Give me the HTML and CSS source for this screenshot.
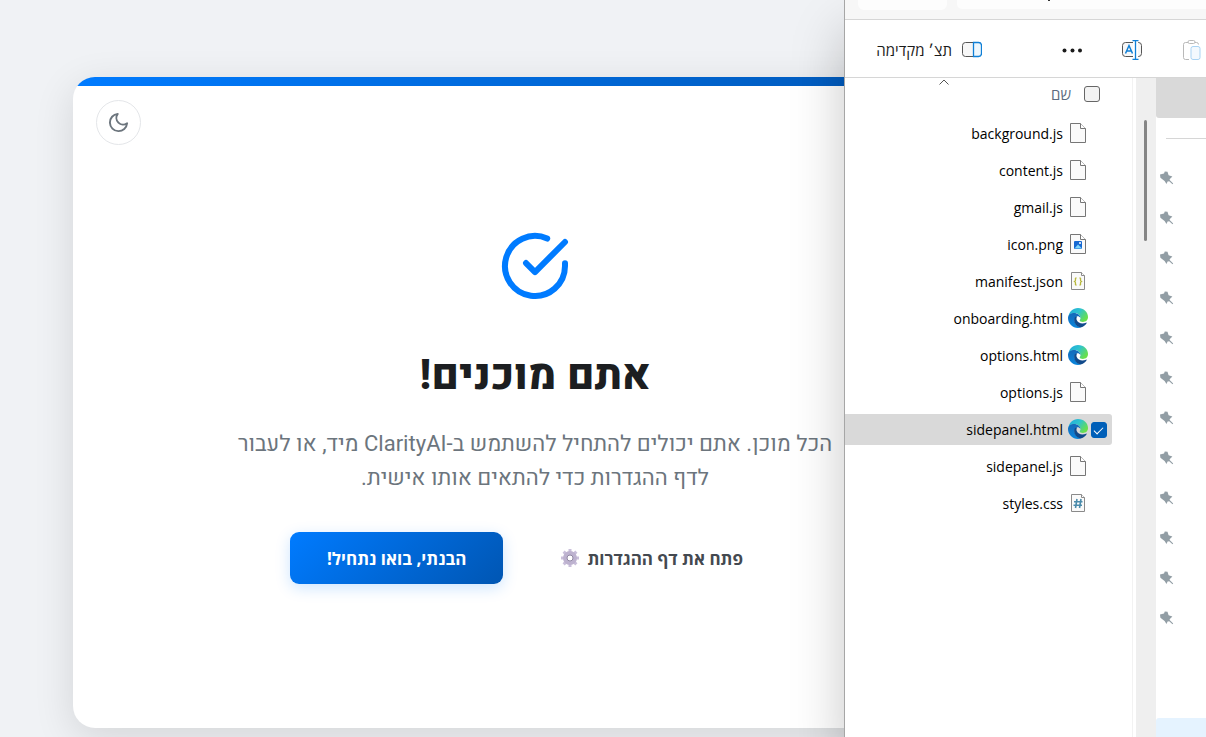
FILE: index.html
```
<!DOCTYPE html>
<html lang="he" dir="rtl">

<head>
    <meta charset="UTF-8">
    <meta name="viewport" content="width=device-width, initial-scale=1.0">
    <title>ClarityAI</title>
    <link rel="stylesheet" href="styles.css">
</head>

<body>
    <svg width="0" height="0" class="symbols" aria-hidden="true">
        <defs>
            <linearGradient id="edge-top" x1="0" y1="0" x2="1" y2="0.6">
                <stop offset="0" stop-color="#1fa8dc" />
                <stop offset="0.5" stop-color="#2fc3cf" />
                <stop offset="1" stop-color="#6ae04a" />
            </linearGradient>
            <linearGradient id="edge-side" x1="0" y1="0" x2="0" y2="1">
                <stop offset="0" stop-color="#1569b8" />
                <stop offset="1" stop-color="#0a86dc" />
            </linearGradient>
        </defs>
        <symbol id="doc" viewBox="0 0 20 20">
            <path d="M2.5 .5h10l5 5v14h-15z" fill="#fafafa" stroke="#767676" />
            <path d="M12.5 .5v5h5" fill="#fff" stroke="#767676" />
        </symbol>
        <symbol id="doc-small" viewBox="0 0 20 20">
            <path d="M3.5 1.5h10l3 3v14h-13z" fill="#fafafa" stroke="#8a8a8a" />
            <path d="M13.5 1.5v3h3" fill="#fff" stroke="#8a8a8a" />
        </symbol>
        <symbol id="edge" viewBox="0 0 20 20">
            <path d="M0.4 9C1 3.700 5 0 10 0c5.800 0 10 4.300 10 9 0 3.200-2.300 4.900-5 4.900-2.200 0-3.300-.8-3.300-1.500 0-.6.8-.9.8-2.400C12.500 7 9.500 5 6.300 5 3.500 5 1.300 6.700.4 9z" fill="url(#edge-top)" />
            <path d="M0 10C0 6.800 2.900 4.900 6.100 4.900c3.400 0 6.400 2.100 6.400 5.100-1-1.600-2.200-2-3.300-1.800C7.500 8.600 6.600 10 6.600 12c0 3.700 2.700 6.500 6.400 7.500-.9.300-1.900.5-3 .5C4.500 20 0 15.500 0 10z" fill="url(#edge-side)" />
            <path d="M6.200 11c-.3 4 2.300 7.600 6.200 8.600 2.600-.4 4.900-2.200 6.200-4.400.3-.5-.1-.8-.6-.5-3.600 1.700-8 .7-9.300-2.700-.5-1.400-.1-2.900.6-3.700-1.700.2-3 1.200-3.100 2.700z" fill="#114a8b" />
        </symbol>
        <symbol id="pin" viewBox="0 0 14 14">
            <path d="M0 3.500 4 2.500 4.800 .6 7.500 .8 8.600 4.300 12.400 5.400 9.600 8.300 9.900 9.200 13.200 12.500 12.500 13.300 9.200 10.300 7.600 10.500 6.500 13 4.600 10 .4 6.800z" fill="#929ea5" />
        </symbol>
    </svg>

    <main class="page">
        <section class="card">
            <button class="theme-toggle" type="button" aria-label="מצב כהה">
                <svg width="23" height="23" viewBox="0 0 24 24" fill="none" stroke="currentColor" stroke-width="2" stroke-linecap="round" stroke-linejoin="round">
                    <path d="M21 12.790A9 9 0 1 1 11.210 3 7 7 0 0 0 21 12.790z" />
                </svg>
            </button>
            <svg class="card-icon" width="72" height="72" viewBox="0 0 24 24" fill="none" stroke="currentColor" stroke-width="2" stroke-linecap="round" stroke-linejoin="round">
                <path d="M22 11.080V12a10 10 0 1 1-5.930-9.140" />
                <path d="M22 4 12 14.010l-3-3" />
            </svg>
            <h1>אתם מוכנים!</h1>
            <p>הכל מוכן. אתם יכולים להתחיל להשתמש ב-ClarityAI מיד, או לעבור לדף ההגדרות כדי להתאים אותו אישית.</p>
            <div class="actions">
                <button class="btn btn-secondary" type="button">
                    פתח את דף ההגדרות
                    <svg width="20" height="20" viewBox="0 0 20 20">
                        <g stroke="#c9bfda" stroke-width="3">
                            <path d="M10 1v18M1 10h18M3.600 3.600l12.800 12.800M16.400 3.600 3.600 16.400" />
                        </g>
                        <circle cx="10" cy="10" r="5" fill="#e9e5f0" stroke="#bdb2cf" stroke-width="4" />
                        <circle cx="10" cy="10" r="3" fill="#fff" stroke="#9188a3" />
                    </svg>
                </button>
                <button class="btn btn-primary" type="button">הבנתי, בואו נתחיל!</button>
            </div>
        </section>
    </main>

    <aside class="explorer">
        <div class="address-bar">
            <div class="address"><span class="address-tail"></span></div>
            <div class="search"></div>
        </div>

        <div class="toolbar">
            <button class="tool" type="button" aria-label="הדבק" disabled>
                <svg width="20" height="20" viewBox="0 0 20 20" fill="none">
                    <path d="M6 2.500H3.500a2 2 0 0 0-2 2v13a2 2 0 0 0 2 2H7M13 2.500h1.500a2 2 0 0 1 2 2" stroke="#b9b9b9" />
                    <rect x="6" y=".5" width="7" height="3" rx="1.500" stroke="#b9b9b9" />
                    <rect x="9" y="6.500" width="9" height="13" rx="2" fill="#f3f9fe" stroke="#a9d3f3" />
                </svg>
            </button>
            <button class="tool" type="button" aria-label="שנה שם">
                <svg width="20" height="20" viewBox="0 0 20 20" fill="none">
                    <path d="M11 2.500H3.500a3 3 0 0 0-3 3v8a3 3 0 0 0 3 3H11M16 2.500h.5a3 3 0 0 1 3 3v8a3 3 0 0 1-3 3H16" fill="#f7f7f7" stroke="#555" />
                    <path d="M3.500 13.500 7 5.500l3.500 8M4.800 11h4.400" stroke="#0f7fd6" stroke-width="1.500" />
                    <path d="M13.500.5v19M10.500.5h6M10.500 19.500h6" stroke="#0f7fd6" stroke-width="1.300" />
                </svg>
            </button>
            <button class="tool" type="button" aria-label="עוד">
                <svg width="20" height="20" viewBox="0 0 20 20" fill="#1b1b1b">
                    <circle cx="2.500" cy="10.500" r="2" />
                    <circle cx="10.500" cy="10.500" r="2" />
                    <circle cx="18" cy="10.500" r="2" />
                </svg>
            </button>
            <button class="tool tool-preview" type="button">
                <svg width="20" height="20" viewBox="0 0 20 20">
                    <path d="M11.500 2.500h-8a3 3 0 0 0-3 3v8a3 3 0 0 0 3 3h8" fill="#f7f7f7" stroke="#555" />
                    <path d="M11.500 2.500h5a3 3 0 0 1 3 3v8a3 3 0 0 1-3 3h-5z" fill="#eef7fd" stroke="#0f7fd6" stroke-width="1.300" />
                </svg>
                תצ׳ מקדימה
            </button>
        </div>

        <div class="panes">
            <nav class="nav-pane">
                <div class="nav-head"></div>
                <hr>
                <ul class="pins">
                    <li><svg width="14" height="14"><use href="#pin" /></svg></li>
                    <li><svg width="14" height="14"><use href="#pin" /></svg></li>
                    <li><svg width="14" height="14"><use href="#pin" /></svg></li>
                    <li><svg width="14" height="14"><use href="#pin" /></svg></li>
                    <li><svg width="14" height="14"><use href="#pin" /></svg></li>
                    <li><svg width="14" height="14"><use href="#pin" /></svg></li>
                    <li><svg width="14" height="14"><use href="#pin" /></svg></li>
                    <li><svg width="14" height="14"><use href="#pin" /></svg></li>
                    <li><svg width="14" height="14"><use href="#pin" /></svg></li>
                    <li><svg width="14" height="14"><use href="#pin" /></svg></li>
                    <li><svg width="14" height="14"><use href="#pin" /></svg></li>
                    <li><svg width="14" height="14"><use href="#pin" /></svg></li>
                </ul>
                <div class="nav-current"></div>
            </nav>
            <div class="scrollbar">
                <div class="thumb"></div>
            </div>
            <div class="files">
                <div class="files-head">
                    <svg class="sort" width="10" height="6" viewBox="0 0 10 6" fill="none" stroke="#555">
                        <path d="M.5 5.500 5 1l4.500 4.500" />
                    </svg>
                    <input class="check" type="checkbox" id="all">
                    <label for="all">שם</label>
                </div>
                <ul class="file-list">
                    <li class="file">
                        <input class="check" type="checkbox" id="f1">
                        <svg width="20" height="20"><use href="#doc" /></svg>
                        <label for="f1">background.js</label>
                    </li>
                    <li class="file">
                        <input class="check" type="checkbox" id="f2">
                        <svg width="20" height="20"><use href="#doc" /></svg>
                        <label for="f2">content.js</label>
                    </li>
                    <li class="file">
                        <input class="check" type="checkbox" id="f3">
                        <svg width="20" height="20"><use href="#doc" /></svg>
                        <label for="f3">gmail.js</label>
                    </li>
                    <li class="file">
                        <input class="check" type="checkbox" id="f4">
                        <svg width="20" height="20">
                            <use href="#doc" />
                            <rect x="6" y="7" width="8" height="8" rx="1" fill="#1769d2" />
                            <path d="m6.500 14.500 3.500-4 4 4z" fill="#7fd6fb" />
                            <circle cx="12" cy="9" r="1" fill="#fff" />
                        </svg>
                        <label for="f4">icon.png</label>
                    </li>
                    <li class="file">
                        <input class="check" type="checkbox" id="f5">
                        <svg width="20" height="20" fill="none">
                            <use href="#doc-small" />
                            <path d="M8.500 7C7 7 7.500 8 7.500 9s-.3 1-1 1.500c.7.500 1 .5 1 1.500s-.5 2 1 2M11.500 7c1.500 0 1 1 1 2s.3 1 1 1.500c-.7.500-1 .5-1 1.500s.5 2-1 2" stroke="#b7b73b" stroke-width="1.300" />
                        </svg>
                        <label for="f5">manifest.json</label>
                    </li>
                    <li class="file">
                        <input class="check" type="checkbox" id="f6">
                        <svg width="20" height="20"><use href="#edge" /></svg>
                        <label for="f6">onboarding.html</label>
                    </li>
                    <li class="file">
                        <input class="check" type="checkbox" id="f7">
                        <svg width="20" height="20"><use href="#edge" /></svg>
                        <label for="f7">options.html</label>
                    </li>
                    <li class="file">
                        <input class="check" type="checkbox" id="f8">
                        <svg width="20" height="20"><use href="#doc" /></svg>
                        <label for="f8">options.js</label>
                    </li>
                    <li class="file selected">
                        <input class="check" type="checkbox" id="f9" checked>
                        <svg width="20" height="20"><use href="#edge" /></svg>
                        <label for="f9">sidepanel.html</label>
                    </li>
                    <li class="file">
                        <input class="check" type="checkbox" id="f10">
                        <svg width="20" height="20"><use href="#doc" /></svg>
                        <label for="f10">sidepanel.js</label>
                    </li>
                    <li class="file">
                        <input class="check" type="checkbox" id="f11">
                        <svg width="20" height="20" fill="none">
                            <use href="#doc-small" />
                            <path d="M9 6 7.500 15M13 6l-1.500 9M6 8.700h8.500M5.500 12.300H14" stroke="#4b8bab" stroke-width="1.600" />
                        </svg>
                        <label for="f11">styles.css</label>
                    </li>
                </ul>
            </div>
        </div>
    </aside>
</body>

</html>
```
FILE: styles.css
```
* {
    box-sizing: border-box;
}

body {
    margin: 0;
    min-height: 100vh;
    background-color: #f0f2f5;
    font-family: Heebo, Roboto, "Open Sans", sans-serif;
    overflow: hidden;
}

button {
    border: none;
    background: none;
    padding: 0;
    font-family: "Open Sans", sans-serif;
}

ul {
    list-style: none;
    margin: 0;
    padding: 0;
}

.symbols {
    position: absolute;
}

/* onboarding page, runs on behind the file window */
.page {
    margin-right: 136px;
    padding: 77px 73px 0;
}

.card {
    position: relative;
    display: flex;
    flex-direction: column;
    align-items: center;
    padding: 153px 48px 144px;
    border-radius: 22px;
    background: linear-gradient(90deg, #007bff, #0056b3) top / 100% 9px no-repeat #fff;
    box-shadow: 0 10px 40px rgba(0, 0, 0, 0.12);
    text-align: center;
}

.theme-toggle {
    position: absolute;
    top: 23px;
    left: 23px;
    display: flex;
    align-items: center;
    justify-content: center;
    width: 45px;
    height: 45px;
    border: 1px solid #e4e6e9;
    border-radius: 50%;
    color: #6c757d;
}

.card-icon {
    color: #007bff;
}

h1 {
    margin: 48px 0 24px;
    font-size: 42px;
    line-height: 53px;
    font-weight: 800;
    color: #1c1e21;
}

.card p {
    max-width: 610px;
    margin: 0 0 37px;
    font-size: 22px;
    line-height: 34px;
    color: #6c757d;
}

.actions {
    display: flex;
    gap: 20px;
}

.btn {
    display: flex;
    align-items: center;
    gap: 7px;
    height: 52px;
    padding: 0 37px;
    border-radius: 9px;
    font-size: 17px;
    font-weight: 700;
}

.btn-primary {
    color: #fff;
    background: linear-gradient(135deg, #007bff, #0056b3);
    box-shadow: 0 4px 15px rgba(0, 123, 255, 0.2);
}

.btn-secondary {
    color: #444950;
}

/* file window */
.explorer {
    position: absolute;
    top: 0;
    right: 0;
    display: flex;
    flex-direction: column;
    width: 362px;
    height: 100vh;
    border-left: 1px solid #a6a6a6;
    background-color: #fff;
    box-shadow: 0 30px 50px rgba(0, 0, 0, 0.22);
    font-family: "Open Sans", sans-serif;
}

.address-bar {
    display: flex;
    align-items: flex-start;
    gap: 10px;
    height: 20px;
    padding-left: 13px;
    border-bottom: 1px solid #d6d6d6;
    background-color: #f7f7f7;
}

.address {
    flex: 1;
    height: 9px;
    padding-right: 156px;
    border-radius: 0 0 0 5px;
    background-color: #fdfdfd;
}

.address-tail {
    display: block;
    width: 2px;
    height: 1px;
    background-color: #333;
}

.search {
    width: 89px;
    height: 10px;
    border-radius: 0 0 6px 6px;
    background-color: #fdfdfd;
}

.toolbar {
    display: flex;
    align-items: center;
    gap: 40px;
    height: 58px;
    padding: 3px 4px 0 0;
    border-bottom: 1px solid #d6d6d6;
}

.tool {
    display: flex;
    align-items: center;
    gap: 10px;
    font-size: 15px;
    color: #1b1b1b;
}

.tool-preview {
    margin-right: 40px;
}

.panes {
    display: flex;
    flex: 1;
}

.nav-pane {
    display: flex;
    flex-direction: column;
    width: 50px;
}

.nav-head {
    height: 40px;
    border-radius: 0 0 0 3px;
    background-color: #d9d9d9;
}

.nav-pane hr {
    width: 40px;
    margin: 20px 0 19px;
    border: none;
    border-top: 1px solid #d6d6d6;
    align-self: flex-start;
}

.pins li {
    display: flex;
    align-items: center;
    justify-content: flex-end;
    height: 40px;
    padding-left: 4px;
}

.nav-current {
    height: 19px;
    margin-top: auto;
    border-radius: 3px 0 0 0;
    background-color: #e5f3ff;
}

.scrollbar {
    width: 20px;
    padding: 42px 9px 0 8px;
    background-color: #efefef;
}

.thumb {
    height: 121px;
    border-radius: 2px;
    background-color: #858585;
}

.files {
    flex: 1;
    margin-right: 3px;
    border-right: 1px solid #f2f2f2;
}

.files-head {
    position: relative;
    display: flex;
    align-items: center;
    gap: 13px;
    height: 32px;
    margin-bottom: 8px;
    padding-right: 32px;
    font-size: 15px;
    color: #5c6b80;
}

.sort {
    position: absolute;
    top: 1px;
    left: 94px;
}

.check {
    appearance: none;
    width: 16px;
    height: 16px;
    margin: 0;
    border: 1px solid #666;
    border-radius: 3px;
    background-color: #f3f3f3;
}

.check:checked {
    border-color: #005fb8;
    background-color: #005fb8;
}

.check:checked::after {
    content: "";
    display: block;
    width: 8px;
    height: 4px;
    margin: 4px 3px;
    border-left: 1px solid #fff;
    border-bottom: 1px solid #fff;
    transform: rotate(-45deg);
}

.file-list {
    display: flex;
    flex-direction: column;
    gap: 6px;
}

.file {
    display: flex;
    align-items: center;
    height: 31px;
    margin-right: 20px;
    padding-right: 5px;
    border-radius: 0 3px 3px 0;
    font-size: 14px;
    color: #000;
}

.file svg {
    margin-bottom: 2px;
}

.file .check {
    margin-left: 3px;
    visibility: hidden;
}

.file label {
    margin-right: 5px;
}

.file.selected {
    background-color: #d9d9d9;
}

.file.selected .check {
    visibility: visible;
}
```
